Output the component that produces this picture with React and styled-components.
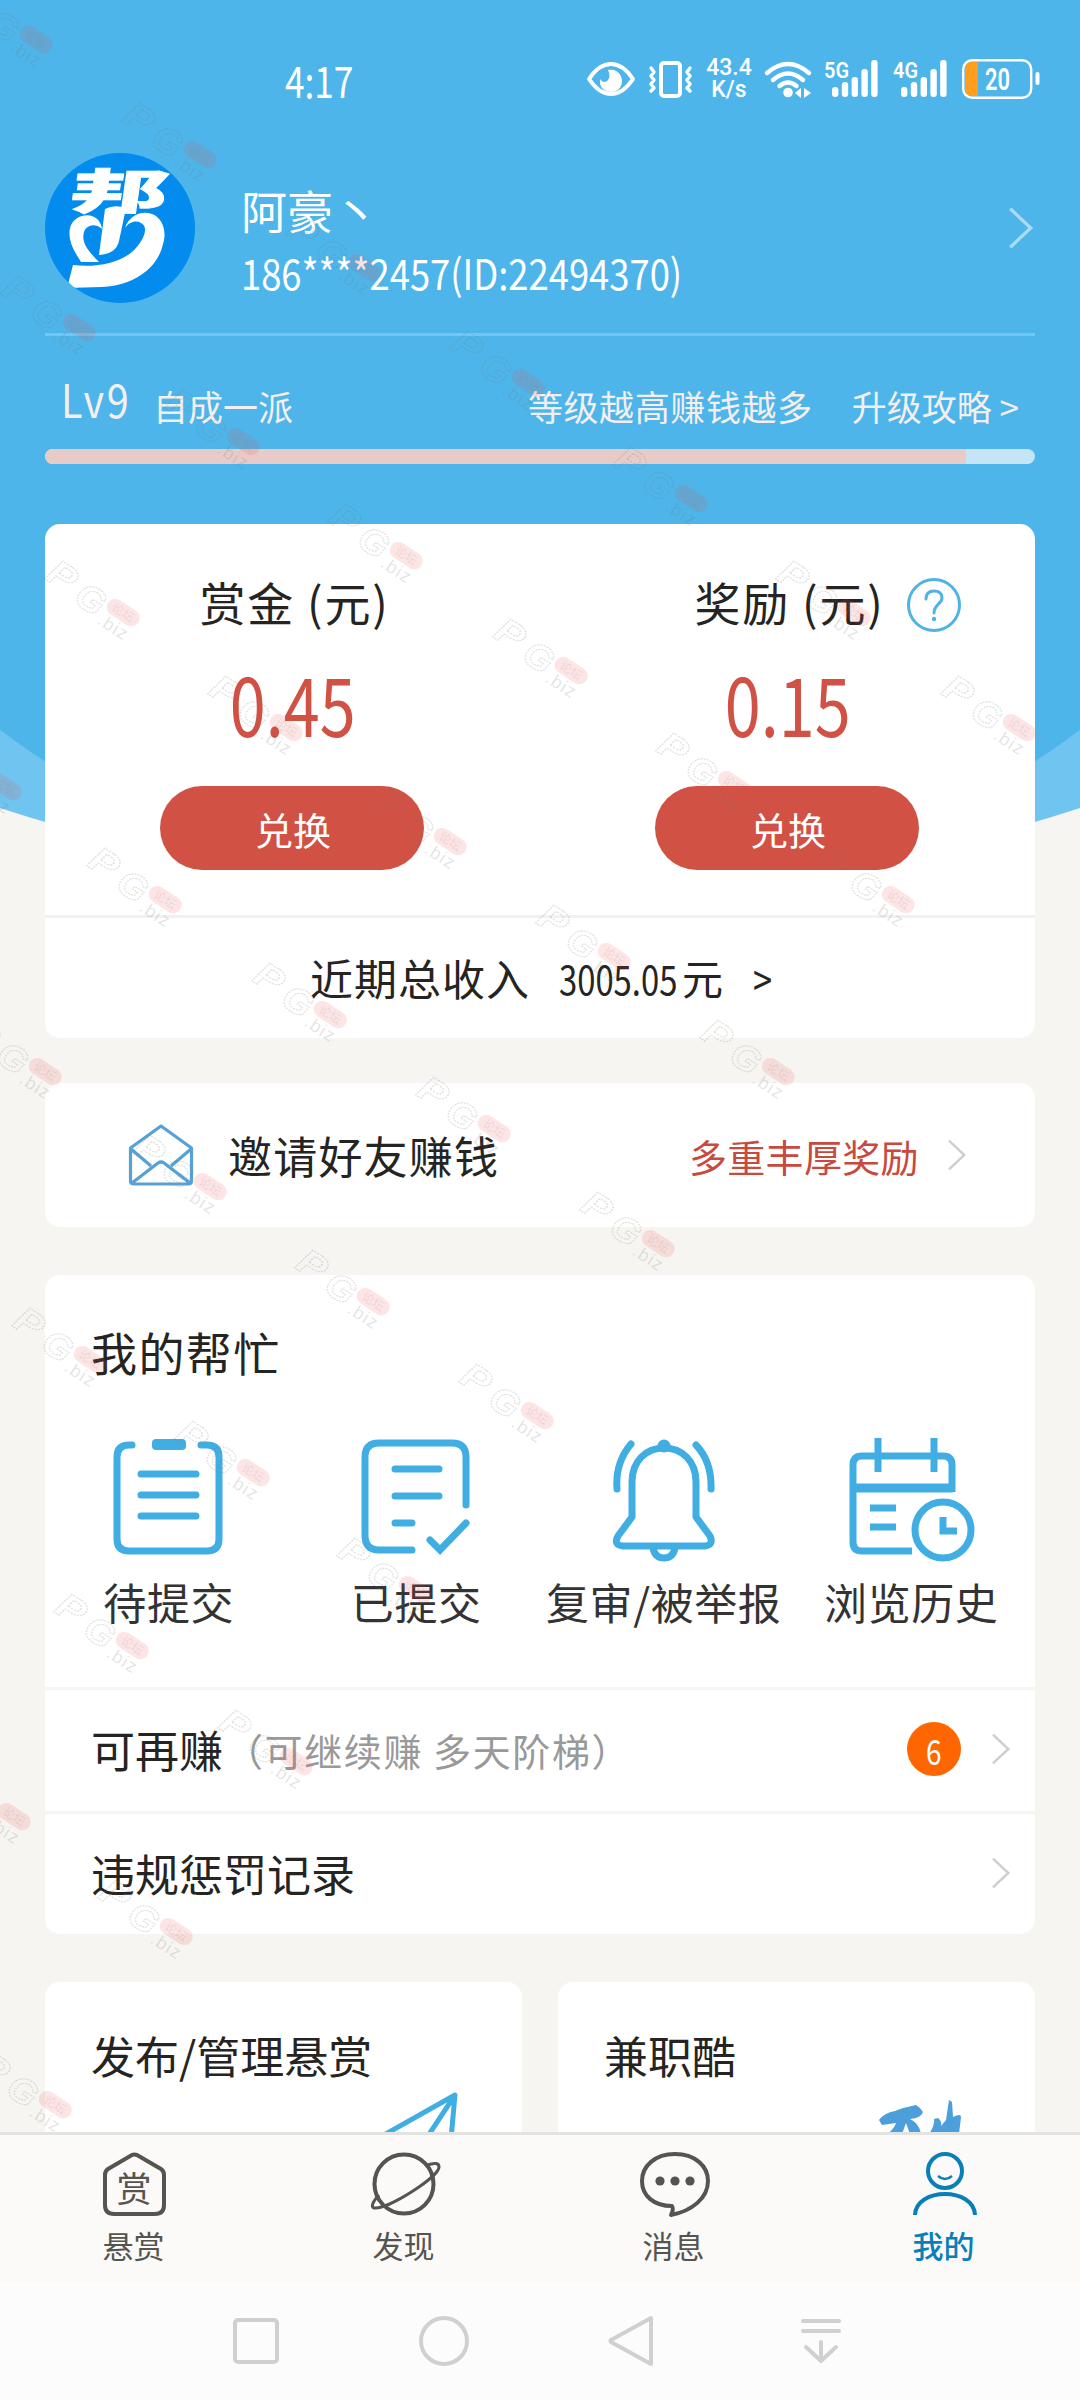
import React from 'react'
import styled, { createGlobalStyle, css } from 'styled-components';

const blue = '#4db5e9';
const iconBlue = '#41aee3';
const red = '#d15144';
const dark = '#252422';

const GlobalStyle = createGlobalStyle`
  * { box-sizing: border-box; }
  body {
    margin: 0;
    background: #f6f5f1;
    font-family: "Noto Sans CJK SC", sans-serif;
    color: ${dark};
  }
  svg { display: block; flex: none; overflow: visible; }
`

const Screen = styled.div`
  position: relative;
  width: 1080px;
  height: 2400px;
  overflow: hidden;
  display: flex;
  flex-direction: column;
`

const Page = styled.main`
  position: relative;
  height: 2132px;
  overflow: hidden;
  padding: 0 45px;
`

/* curved backdrop behind the header and the first card */
const Backdrop = styled.svg`
  position: absolute;
  top: 0;
  left: 0;
  z-index: -1;
`

/* condensed digits */
const Narrow = styled.span`
  display: inline-block;
  transform: scaleX(${props => props.$scale});
  transform-origin: ${props => props.$origin || 'left'};
`

const StatusBar = styled.div`
  height: 153px;
  padding: 5px 0 0 238px;
  margin-right: -5px;
  display: flex;
  align-items: center;
  color: #fff;
`

const Clock = styled.span`
  font-size: 44px;
  line-height: 50px;
  margin: 0 auto 0 2px;
`

const StatusIcons = styled.div`
  display: flex;
  align-items: center;
  gap: 12px;
`

const Speed = styled.div`
  width: 46px;
  font: 500 23px/22px Roboto, "Liberation Sans", sans-serif;
  text-align: center;
`

const SignalIcon = styled.svg`
  margin-right: 2px;
`

const Profile = styled.section`
  height: 183px;
  display: flex;
  border-bottom: 3px solid #74c5f2;
`

const UserInfo = styled.div`
  flex: 1;
  padding: 27px 0 0 46px;
  color: #fff;
`

const UserName = styled.div`
  font-size: 46px;
  line-height: 58px;
  white-space: pre;
`

const UserId = styled.div`
  margin-top: 4px;
  font-size: 42px;
  line-height: 60px;
`

const ProfileArrow = styled.div`
  padding: 54px 0 0;
`

const LevelRow = styled.div`
  height: 113px;
  padding: 27px 16px 0 16px;
  display: flex;
  align-items: center;
  color: #f5eeef;
  font-size: 35px;
  line-height: 50px;
`

const Level = styled.span`
  width: 92px;
  font-size: 46px;
  letter-spacing: 3px;
  margin-top: -16px;
`

const LevelTip = styled.span`
  margin: 0 39px 0 auto;
  letter-spacing: .6px;
`

const Track = styled.div`
  height: 15px;
  border-radius: 8px;
  overflow: hidden;
  background: #c5e5f6;
`

const Fill = styled.div`
  height: 100%;
  background: #e8cbc8;
`

const Card = styled.section`
  background: #fff;
  border-radius: 15px;
  margin-top: ${props => props.$top}px;
  height: ${props => props.$height}px;
  display: flex;
  flex-direction: column;
`

const Balances = styled.div`
  height: 394px;
  display: grid;
  grid-template-columns: 1fr 1fr;
  border-bottom: 3px solid #f2f0f0;
`

const Balance = styled.div`
  display: flex;
  flex-direction: column;
  align-items: center;
  padding-top: 45px;
`

const BalanceTitle = styled.div`
  position: relative;
  font-size: 46px;
  line-height: 64px;
  letter-spacing: 1.8px;
  margin-left: 4px;
  white-space: pre;
`

const Help = styled.svg`
  position: absolute;
  left: 100%;
  top: 9px;
  margin-left: 22px;
`

const Amount = styled.div`
  margin-top: 17px;
  font-size: 82px;
  line-height: 104px;
  color: ${red};
`

const Exchange = styled.button`
  margin: 32px 1px 0 0;
  width: 264px;
  height: 84px;
  border: 0;
  border-radius: 42px;
  background: ${red};
  color: #fff;
  font: inherit;
  font-size: 38px;
  padding: 0 0 0 2px;
`

const Income = styled.div`
  flex: 1;
  display: flex;
  align-items: center;
  padding: 0 0 2px 265px;
  font-size: 43px;
  letter-spacing: 1px;
`

const IncomeSum = styled.span`
  width: 163px;
  margin: 0 31px 0 29px;
  display: flex;
  font-size: 41px;
  letter-spacing: 0;
`

const IncomeNumber = styled.span`
  width: 123px;
`

const Invite = styled.div`
  flex: 1;
  display: flex;
  align-items: center;
  padding: 0 68px 0 84px;
  font-size: 44px;
  letter-spacing: 1.2px;
`

const InviteText = styled.span`
  margin: 0 auto 0 35px;
`

const InviteBonus = styled.span`
  margin-right: 29px;
  font-size: 38px;
  letter-spacing: .3px;
  color: #c8493e;
`

const CardTitle = styled.h2`
  margin: 0;
  padding: ${props => props.$pad}px 0 0 46px;
  font-weight: 400;
  font-size: ${props => props.$size || 46}px;
  line-height: 68px;
  letter-spacing: ${props => props.$spacing || 0}px;
`

const Tools = styled.div`
  height: 304px;
  display: grid;
  grid-template-columns: repeat(4, 1fr);
`

const Tool = styled.div`
  display: flex;
  flex-direction: column;
  align-items: center;
  padding-top: 52px;
  font-size: 43px;
  line-height: 60px;
  letter-spacing: .6px;
  color: #333;
  white-space: nowrap;

  svg { margin-bottom: 8px; }
`

const Row = styled.div`
  height: 124px;
  border-top: 3px solid #f6f5f1;
  display: flex;
  align-items: center;
  padding: 0 24px 2px 46px;
  font-size: 44px;
`

const RowNote = styled.span`
  margin-left: 2px;
  font-size: 38px;
  letter-spacing: 1.6px;
  color: #999;
`

const RowEnd = styled.div`
  margin-left: auto;
  display: flex;
  align-items: center;
  gap: 31px;
`

const Badge = styled.span`
  width: 54px;
  height: 54px;
  border-radius: 50%;
  background: #ff6600;
  color: #fff;
  font-size: 35px;
  line-height: 56px;
  text-align: center;
`

const Pair = styled.div`
  display: grid;
  grid-template-columns: 1fr 1fr;
  gap: 36px;
`

const PairArt = styled.div`
  display: flex;
  justify-content: flex-end;
  padding-right: ${props => props.$right}px;
  margin-top: 3px;
`

const TabBar = styled.nav`
  height: 150px;
  display: grid;
  grid-template-columns: repeat(4, 1fr);
  background: #fbfaf8;
  border-top: 3px solid #e3e3e2;
`

const Tab = styled.div`
  display: flex;
  flex-direction: column;
  align-items: center;
  padding: 17px 3px 0 0;
  font-size: 31px;
  line-height: 40px;
  color: #555450;

  svg { position: relative; left: 2px; }
  span { margin-top: 7px; }

  ${props => props.$active && css`
    color: #087fb8;
    font-weight: 500;
  `}
`

const SystemNav = styled.div`
  height: 118px;
  background: #fcfcfc;
  display: flex;
  align-items: center;
  padding-left: 230px;
`

const NavIcon = styled.svg`
  margin-right: ${props => props.$after || 0}px;
`

const Marks = styled.svg`
  position: absolute;
  inset: 0;
  pointer-events: none;
`

const Arrow = ({ color = '#cfcfcf', size = 30 }) => (
  <svg width={size * 0.64} height={size + 2} viewBox="0 0 20 32" fill="none" stroke={color} strokeWidth="2.6">
    <path d="M1 1L17 16L1 31" />
  </svg>
)

const Eye = () => (
  <svg width="50" height="36" viewBox="0 0 50 36">
    <path d="M3 18Q13 3 25 3T47 18Q37 33 25 33T3 18Z" fill="none" stroke="#fff" strokeWidth="4" strokeLinejoin="round" />
    <path d="M22 9C31 7 36 14 36 20C36 27 31 31 25 31C18 31 13 26 14 18C17 23 22 21 23 17C24 14 23 11 22 9Z" fill="#fff" />
  </svg>
)

const Vibrate = () => (
  <svg width="46" height="37" viewBox="0 0 46 37" fill="none" stroke="#fff">
    <rect x="13" y="2" width="19" height="33" rx="3" strokeWidth="4" />
    <path d="M3 7L6 11L3 15L6 19L3 23L6 27L3 30M42 7L39 11L42 15L39 19L42 23L39 27L42 30" strokeWidth="3.4" strokeLinejoin="round" strokeLinecap="round" />
  </svg>
)

const Wifi = () => (
  <svg width="48" height="37" viewBox="0 0 48 37" fill="none" stroke="#fff" strokeWidth="4.4" strokeLinecap="round">
    <path d="M3 12Q24 -6 45 12M9 19Q24 6 39 19M15.500 25Q24 18 32.500 25" />
    <circle cx="24" cy="31.500" r="4.800" fill="#fff" stroke="none" />
    <path d="M37 27V37L31 32ZM40 27V37L47 32Z" fill="#fff" stroke="none" />
  </svg>
)

const Signal = ({ label }) => (
  <SignalIcon width="55" height="38" viewBox="0 0 55 38" fill="#fff">
    <text x="0" y="18" fontSize="22" fontWeight="600" textLength="25" lengthAdjust="spacingAndGlyphs" fontFamily="Roboto, sans-serif">{label}</text>
    {[10, 15, 20, 28, 37].map((h, i) => (
      <rect key={h} x={8 + i * 9.8} y={37 - h} width="6.400" height={h} rx="3" />
    ))}
  </SignalIcon>
)

const Battery = () => (
  <svg width="78" height="40" viewBox="0 0 78 40">
    <path d="M9 3H16V37H9Q3 37 3 30V10Q3 3 9 3Z" fill="#ff9d1c" />
    <rect x="1.200" y="1.200" width="68" height="37.500" rx="9" fill="none" stroke="#fff" strokeWidth="2.400" />
    <rect x="73.500" y="13" width="4" height="13" rx="2" fill="#fff" />
    <text x="35.500" y="31" textAnchor="middle" fontSize="31" fontWeight="600" fill="#fff" textLength="25" lengthAdjust="spacingAndGlyphs" fontFamily="Roboto, sans-serif">20</text>
  </svg>
)

const Avatar = () => (
  <svg width="150" height="150" viewBox="0 0 150 150">
    <defs><clipPath id="round"><circle cx="75" cy="75" r="75" /></clipPath></defs>
    <g clipPath="url(#round)">
      <rect width="150" height="150" fill="#048bee" />
      <text transform="translate(23 56) skewX(-8) scale(2.060 1)" fontSize="48" fontWeight="900" fill="#fff" stroke="#fff" strokeWidth=".6" fontFamily="Noto Sans CJK SC">邦</text>
      <g fill="#fff">
        <path d="M60 56Q69 51 81 55L74 88Q71 101 54 102Z" />
        <path d="M57 76C56 66 47 60 37 63C26 66 23 76 25 86C27 96 32 102 36 109H54C43 98 36 89 39 79C41 73 49 69 57 76Z" />
        <path d="M80 75C84 63 96 57 107 61C118 65 122 79 118 91C112 118 85 133 56 134L22 135L28 112C51 115 78 110 91 95C99 86 104 74 96 70C91 67 84 69 80 75Z" />
      </g>
    </g>
  </svg>
)

const Envelope = () => (
  <svg width="64" height="62" viewBox="0 0 64 62" fill="none" stroke="#56a1d5" strokeWidth="3.200" strokeLinejoin="round">
    <path d="M1.500 24L32 2L62.500 24V57Q62.500 60 59 60H5Q1.500 60 1.500 57ZM2 25L22 42M62 25L42 42M3 59L29 39Q32 37 35 39L61 59" />
  </svg>
)

const toolProps = { width: 126, height: 126, fill: 'none', stroke: iconBlue, strokeWidth: 7 }

const PendingIcon = () => (
  <svg {...toolProps} viewBox="-2 0 126 126" strokeLinecap="round">
    <path d="M24 8H21Q9 8 9 20V102Q9 114 21 114H99Q111 114 111 102V20Q111 8 99 8H93M33 37H88M33 58H88M33 79H88" />
    <rect x="44" y="2" width="34" height="11" rx="4" fill={iconBlue} stroke="none" />
  </svg>
)

const SubmittedIcon = () => (
  <svg {...toolProps} viewBox="-2 0 126 126" strokeLinecap="round">
    <path d="M57 113H24Q10 113 10 98V20Q10 6 24 6H97Q111 6 111 20V68M40 32H84M40 59H84M40 86H57M75 103L85 113L111 86" />
  </svg>
)

const BellIcon = () => (
  <svg {...toolProps} viewBox="0 0 126 126" strokeLinecap="round" strokeLinejoin="round">
    <path d="M31 80V45C31 24 45 11 63 11S95 24 95 45V80L109 99Q113 108 104 109H22Q12 108 17 99ZM16 52Q14 26 30 7M110 52Q111 25 95 8M52 111Q54 121 63 121T74 111" />
    <circle cx="63" cy="9" r="6.500" fill={iconBlue} stroke="none" />
  </svg>
)

const HistoryIcon = () => (
  <svg {...toolProps} viewBox="3 0 126 126">
    <path d="M67 114H17Q8 114 8 105V28Q8 19 17 19H98Q107 19 107 28V55" />
    <path d="M8 51H108" strokeWidth="9" />
    <path d="M33 1V35M89 1V35M25 71H51M25 90H51M98 80V94H112" />
    <circle cx="98" cy="93" r="28" />
  </svg>
)

const Plane = () => (
  <svg width="82" height="80" viewBox="0 0 82 80" fill="none" stroke={iconBlue} strokeWidth="5" strokeLinejoin="round">
    <path d="M-10 52L77 3L70 80M77 3L38 62" />
  </svg>
)

const Brush = () => (
  <svg width="84" height="80" viewBox="0 0 84 80" fill="#4c9fda">
    <path d="M0 28Q5 21 16 19Q26 15 37 13Q42 16 44 20Q42 26 31 27Q40 31 42 42H31L27 31L23 42H9Q16 35 17 31L3 33Z" />
    <path d="M70 8L73 10L74 25Q82 21 82 25L80 42H50Q56 33 55 27L59 26Q63 29 62 34L67 28Z" />
  </svg>
)

const tabProps = { width: 72, height: 66, fill: 'none', stroke: 'currentColor', strokeWidth: 4, strokeLinejoin: 'round' }

const RewardIcon = () => (
  <svg {...tabProps} viewBox="0 0 72 66">
    <path d="M32 3Q34 2 37 3L61 17Q64 19 64 23V53Q64 62 55 62H14Q5 62 5 53V23Q5 19 8 17Z" />
    <text x="34" y="50" textAnchor="middle" fontSize="35" fill="currentColor" stroke="none">赏</text>
  </svg>
)

const PlanetIcon = () => (
  <svg {...tabProps} viewBox="0 0 72 66">
    <circle cx="34" cy="32" r="29.500" />
    <path d="M57 13Q69 9 69 15C69 25 17 58 4 56Q-1 54 9 43" strokeWidth="3" />
  </svg>
)

const MessageIcon = () => (
  <svg {...tabProps} viewBox="2 0 72 66">
    <path d="M37 2C17 2 4 14 4 29C4 44 16 54 34 54Q36 57 33 63C54 59 70 46 70 29C70 14 57 2 37 2Z" />
    <g fill="currentColor" stroke="none"><circle cx="22" cy="29" r="4.600" /><circle cx="37" cy="29" r="4.600" /><circle cx="52" cy="29" r="4.600" /></g>
  </svg>
)

const MineIcon = () => (
  <svg {...tabProps} viewBox="0 0 72 66">
    <circle cx="35" cy="19" r="17" />
    <path d="M28 24Q35 30 42 24" strokeWidth="2.400" />
    <path d="M5 63C6 35 64 35 65 63" />
  </svg>
)

const tools = [
  { label: '待提交', Icon: PendingIcon },
  { label: '已提交', Icon: SubmittedIcon },
  { label: '复审/被举报', Icon: BellIcon },
  { label: '浏览历史', Icon: HistoryIcon },
]

const tabs = [
  { label: '悬赏', Icon: RewardIcon },
  { label: '发现', Icon: PlanetIcon },
  { label: '消息', Icon: MessageIcon },
  { label: '我的', Icon: MineIcon, active: true },
]

const marks = [
  [36, 40], [200, 155], [364, 268], [79, 328], [243, 442], [528, 383], [691, 499], [406, 556],
  [123, 613], [854, 613], [571, 671], [1019, 728], [286, 728], [734, 785], [450, 842], [5, 787],
  [165, 900], [898, 900], [614, 957], [330, 1015], [45, 1072], [778, 1072], [494, 1129], [210, 1187],
  [658, 1244], [373, 1302], [90, 1360], [537, 1416], [253, 1473], [415, 1590], [132, 1646],
  [296, 1762], [14, 1817], [176, 1932], [55, 2105],
]

const Watermarks = () => (
  <Marks width="1080" height="2400" fontFamily="Liberation Sans">
    {marks.map(([x, y]) => (
      <g key={`${x}-${y}`} transform={`translate(${x} ${y}) rotate(33)`}>
        <g fill="none" stroke="#777" strokeOpacity=".24" strokeWidth="1.200" strokeDasharray="2 1" fontSize="36" fontWeight="700" fontStyle="italic">
          <text x="-85" y="14" textLength="28" lengthAdjust="spacingAndGlyphs">P</text>
          <text x="-49" y="18" textLength="29" lengthAdjust="spacingAndGlyphs">G</text>
        </g>
        <rect x="-18" y="-9" width="36" height="17" rx="8.500" fill="#f04848" fillOpacity=".14" />
        <text x="-12" y="4" fontSize="12" fill="#888" fillOpacity=".18" fontFamily="Noto Sans CJK SC">论坛</text>
        <text x="-17" y="23" fontSize="18" fill="#777" fillOpacity=".2" textLength="32">.biz</text>
      </g>
    ))}
  </Marks>
)

const App = () => (
  <Screen>
    <GlobalStyle />
    <Page>
      <Backdrop width="1080" height="960">
        <path d="M0 0H1080V808Q810 896 540 896T0 808Z" fill="#70c4f0" />
        <path d="M0 0H1080V730Q850 902 540 902T0 730Z" fill={blue} />
      </Backdrop>

      <StatusBar>
        <Clock><Narrow $scale={0.8}>4:17</Narrow></Clock>
        <StatusIcons>
          <Eye />
          <Vibrate />
          <Speed>43.4<br />K/s</Speed>
          <Wifi />
          <Signal label="5G" />
          <Signal label="4G" />
          <Battery />
        </StatusIcons>
      </StatusBar>

      <Profile>
        <Avatar />
        <UserInfo>
          <UserName>阿豪丶</UserName>
          <UserId><Narrow $scale={0.866}>186****2457(ID:22494370)</Narrow></UserId>
        </UserInfo>
        <ProfileArrow><Arrow color="#aadcf5" size={40} /></ProfileArrow>
      </Profile>

      <LevelRow>
        <Level><Narrow $scale={0.86}>Lv9</Narrow></Level>
        <span>自成一派</span>
        <LevelTip>等级越高赚钱越多</LevelTip>
        <span>升级攻略 &gt;</span>
      </LevelRow>
      <Track><Fill style={{ width: '93%' }} /></Track>

      <Card $top={60} $height={514}>
        <Balances>
          <Balance>
            <BalanceTitle>赏金 (元)</BalanceTitle>
            <Amount><Narrow $scale={0.79} $origin="center">0.45</Narrow></Amount>
            <Exchange>兑换</Exchange>
          </Balance>
          <Balance>
            <BalanceTitle>
              奖励 (元)
              <Help width="54" height="54" viewBox="0 0 54 54" fill="none" stroke="#4fb3e3" strokeWidth="3">
                <circle cx="27" cy="27" r="25.500" />
                <path d="M19 21Q19 13 27 13T35 20C35 26 27 26 27 35" strokeLinecap="round" />
                <circle cx="27" cy="41" r="2.200" fill="#4fb3e3" stroke="none" />
              </Help>
            </BalanceTitle>
            <Amount><Narrow $scale={0.79} $origin="center">0.15</Narrow></Amount>
            <Exchange>兑换</Exchange>
          </Balance>
        </Balances>
        <Income>
          近期总收入
          <IncomeSum>
            <IncomeNumber><Narrow $scale={0.8}>3005.05</Narrow></IncomeNumber>元
          </IncomeSum>
          <Narrow $scale={0.8}>&gt;</Narrow>
        </Income>
      </Card>

      <Card $top={45} $height={144}>
        <Invite>
          <Envelope />
          <InviteText>邀请好友赚钱</InviteText>
          <InviteBonus>多重丰厚奖励</InviteBonus>
          <Arrow />
        </Invite>
      </Card>

      <Card $top={48} $height={659}>
        <CardTitle $pad={42} $spacing={1.4}>我的帮忙</CardTitle>
        <Tools>
          {tools.map(({ label, Icon }) => (
            <Tool key={label}><Icon />{label}</Tool>
          ))}
        </Tools>
        <Row>
          可再赚<RowNote>（可继续赚 多天阶梯）</RowNote>
          <RowEnd><Badge><Narrow $scale={0.8} $origin="center">6</Narrow></Badge><Arrow /></RowEnd>
        </Row>
        <Row>
          违规惩罚记录
          <RowEnd><Arrow /></RowEnd>
        </Row>
      </Card>

      <Pair>
        <Card $top={48} $height={300}>
          <CardTitle $pad={39} $size={44}>发布/管理悬赏</CardTitle>
          <PairArt $right={62}><Plane /></PairArt>
        </Card>
        <Card $top={48} $height={300}>
          <CardTitle $pad={39} $size={44}>兼职酷</CardTitle>
          <PairArt $right={72}><Brush /></PairArt>
        </Card>
      </Pair>
    </Page>

    <TabBar>
      {tabs.map(({ label, Icon, active }) => (
        <Tab key={label} $active={active}><Icon /><span>{label}</span></Tab>
      ))}
    </TabBar>

    <SystemNav>
      <NavIcon $after={134} width="52" height="52" fill="none" stroke="#d0d0d0" strokeWidth="4">
        <rect x="5" y="5" width="42" height="42" rx="3" />
      </NavIcon>
      <NavIcon $after={136} width="56" height="56" fill="none" stroke="#d0d0d0" strokeWidth="4">
        <circle cx="28" cy="28" r="23" />
      </NavIcon>
      <NavIcon $after={141} width="50" height="54" fill="none" stroke="#d0d0d0" strokeWidth="4" strokeLinejoin="round">
        <path d="M43 4V50L3 28Q2 27 3 26Z" />
      </NavIcon>
      <NavIcon width="44" height="50" fill="none" stroke="#d0d0d0" strokeWidth="4" strokeLinecap="round" strokeLinejoin="round">
        <path d="M4 5H40M4 15H40M22 26V44M7 31L22 45L37 31" />
      </NavIcon>
    </SystemNav>
    <Watermarks />
  </Screen>
)

export default App
